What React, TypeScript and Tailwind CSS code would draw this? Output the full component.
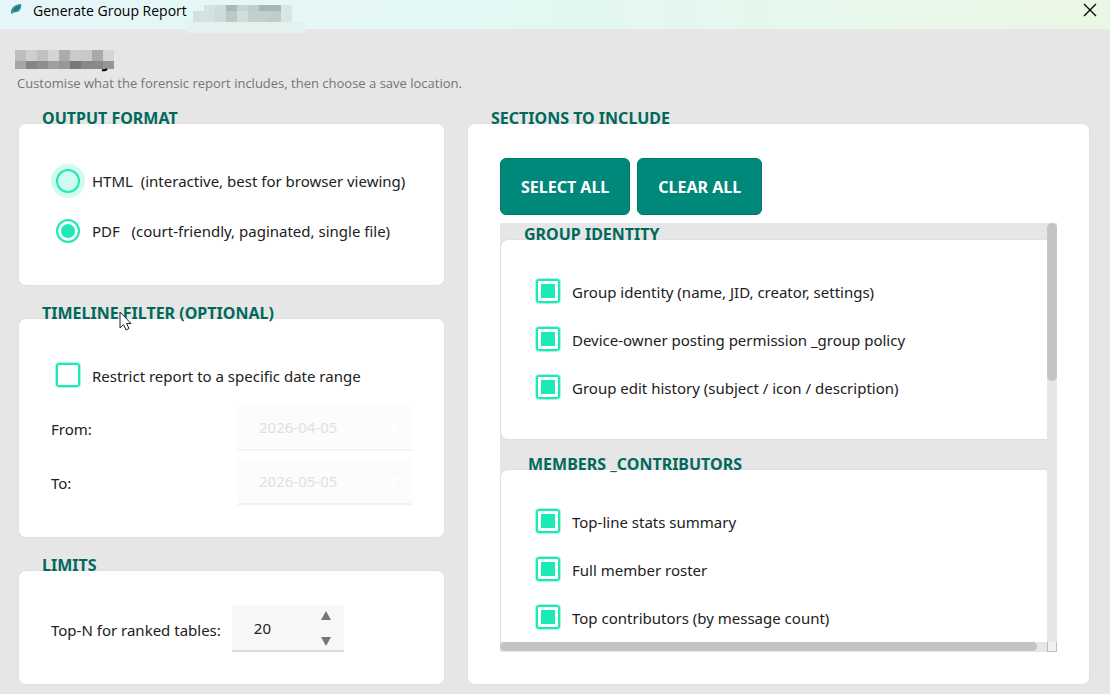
import React from "react";

const outputFormats = [
  { id: "html", name: "HTML", note: "(interactive, best for browser viewing)", hovered: true },
  { id: "pdf", name: "PDF", note: "(court-friendly, paginated, single file)", hovered: false },
];

const dateFields = [
  { id: "from", label: "From:", value: "2026-04-05" },
  { id: "to", label: "To:", value: "2026-05-05" },
];

const sections = [
  {
    title: "GROUP IDENTITY",
    titleClassName: "pl-6",
    items: [
      "Group identity (name, JID, creator, settings)",
      "Device-owner posting permission _group policy",
      "Group edit history (subject / icon / description)",
    ],
  },
  {
    title: "MEMBERS _CONTRIBUTORS",
    titleClassName: "pl-7",
    items: ["Top-line stats summary", "Full member roster", "Top contributors (by message count)"],
  },
];

const titleMosaic = [
  ["", "#d3e4e1", "#cddcd9", "#aab9b6", "#c6d5d2", "#bfcecb", "#a9b7b4", "#a9b7b4", "#d9e8e4"],
  ["#d1e2e0", "#d3e2e0", "#cddcd9", "#bbcac7", "#d0dfdc", "#c2d0cd", "#c2d0cd", "#bfcdca", "#d8e7e3"],
];

const headingMosaic = [
  ["#bfbebd", "#cfcfcf", "#c0c0bf", "#d3d4d6", "#adacab", "#cbcbcb", "#c8c9cc", "#aaa9a7", "#d4d5d7"],
  ["#a6a5a4", "#89837f", "#8d8e8d", "#9aa1a7", "#9b9692", "#74797d", "#888888", "#898986", "#949698"],
];

type PanelProps = {
  title: string;
  className?: string;
  titleClassName?: string;
  bodyClassName?: string;
  children: React.ReactNode;
};

const Panel: React.FC<PanelProps> = ({ title, className = "", titleClassName = "pl-6", bodyClassName = "", children }) => (
  <section className={`flex flex-col ${className}`}>
    <h2 className={`relative z-10 -mb-[5px] text-base leading-5 font-bold text-[#00695c] ${titleClassName}`}>{title}</h2>
    <div className={`rounded-lg border border-[#e0e0e0] bg-white ${bodyClassName}`}>{children}</div>
  </section>
);

const CheckItem: React.FC<{ label: string; checked?: boolean }> = ({ label, checked = false }) => (
  <label className="flex h-12 items-center gap-3">
    <input
      type="checkbox"
      defaultChecked={checked}
      className="size-6 shrink-0 appearance-none rounded-[3px] border-2 border-[#1de9b6] bg-white bg-clip-padding outline-1 outline-[#1de9b6]/40 checked:bg-[#1de9b6] checked:shadow-[inset_0_0_0_3px_white]"
    />
    <span className="pt-0.5">{label}</span>
  </label>
);

const App: React.FC = () => {
  return (
    <div className="flex min-h-screen flex-col bg-[#e6e6e6] font-['Noto_Sans',sans-serif] text-[15px] leading-5 text-[#212121]">
      {/* Title bar */}
      <header className="relative flex h-[29px] items-start bg-linear-to-r from-[#e6f6f9] via-[#e3f8f3] to-[#ebf7e4] pl-2 font-['Open_Sans',sans-serif] text-black">
        <svg width="16" height="16" viewBox="0 0 16 16" className="mt-0.5">
          <path d="M3 12C2.500 6 6 2.500 13 2C14 7 11 10.500 6 10.500L3 12Z" fill="#3d9097" />
          <path d="M5 9C6 6 9 4 12 3.500C12 7 9 9 5 9Z" fill="#1f7d86" />
        </svg>
        <h1 className="ml-[9px] text-[14px] leading-[22px]">Generate Group Report</h1>
        <svg width="118" height="33" viewBox="0 0 118 33" className="absolute top-0 left-[187px]">
          <rect x="0" y="22" width="118" height="11" fill="#e4f2ef" />
          {titleMosaic.map((row, y) =>
            row.map((fill, x) => fill && <rect key={`${x}-${y}`} x={6 + x * 11} y={y === 0 ? 5 : 11} width="11" height={y === 0 ? 6 : 11} fill={fill} />)
          )}
        </svg>
        <button type="button" aria-label="Close" className="ml-auto flex h-5 w-10 items-center justify-center">
          <svg width="14" height="14" viewBox="0 0 14 14" stroke="black" strokeWidth="1.3">
            <path d="M1 1L13 13M13 1L1 13" />
          </svg>
        </button>
      </header>

      <main className="flex grow flex-col pr-5 pb-[9px] pl-[18px]">
        <svg width="100" height="23" viewBox="0 0 100 23" className="mt-[21px] -ml-[3px]">
          {headingMosaic.map((row, y) =>
            row.map((fill, x) => <rect key={`${x}-${y}`} x={x * 11} y={y === 0 ? 0 : 11} width="11" height={y === 0 ? 11 : 8} fill={fill} />)
          )}
          <path d="M87 20Q90 21 92 19" stroke="black" strokeWidth="2" fill="none" />
        </svg>
        <p className="-ml-px font-['Open_Sans',sans-serif] text-[13px] leading-5 text-[#757575]">
          Customise what the forensic report includes, then choose a save location.
        </p>

        <div className="mt-[15px] grid grow grid-cols-[427fr_623fr] gap-[22px]">
          <div className="flex min-w-0 flex-col gap-[17px]">
            <Panel title="OUTPUT FORMAT" bodyClassName="px-8 pt-8 pb-[29px]">
              {outputFormats.map((format) => (
                <label key={format.id} className="flex h-[50px] items-center gap-[7px]">
                  <span className={`flex size-[34px] shrink-0 items-center justify-center rounded-full ${format.hovered ? "bg-[#d2fbf0]" : ""}`}>
                    <input
                      type="radio"
                      name="format"
                      defaultChecked={format.id === "pdf"}
                      className="size-6 appearance-none rounded-full border-2 border-[#1de9b6] bg-clip-padding checked:bg-[#1de9b6] checked:shadow-[inset_0_0_0_3px_white]"
                    />
                  </span>
                  <span className="whitespace-pre">{format.name}{format.id === "pdf" ? "   " : "  "}{format.note}</span>
                </label>
              ))}
            </Panel>

            <Panel title="TIMELINE FILTER (OPTIONAL)" className="relative" bodyClassName="px-8 pt-8 pb-8">
              <div className="pl-[5px]">
                <CheckItem label="Restrict report to a specific date range" />
              </div>
              <div className="mt-1.5 flex flex-col gap-2">
                {dateFields.map((field) => (
                  <div key={field.id} className="flex items-center justify-between">
                    <label htmlFor={field.id} className="pt-0.5">{field.label}</label>
                    <div className="relative w-[175px]">
                      <input
                        id={field.id}
                        type="text"
                        disabled
                        defaultValue={field.value}
                        className="block h-[46px] w-full rounded-t border-b-2 border-[#f2f2f2] bg-[#fcfcfc] px-[22px] text-[#e0e0e0]"
                      />
                      <svg width="10" height="9" viewBox="0 0 10 9" className="absolute top-[18px] right-[14px]">
                        <path d="M0 0H10L5 9Z" fill="white" />
                      </svg>
                    </div>
                  </div>
                ))}
              </div>
              {/* Mouse pointer */}
              <svg width="13" height="20" viewBox="0 0 13 20" className="absolute top-2 left-[101px] z-20">
                <path d="M1 1V17L4.500 13.500L7 19L10 17.500L7.500 12.500H12Z" fill="white" stroke="#222" />
              </svg>
            </Panel>

            <Panel title="LIMITS" bodyClassName="px-8 pt-[34px] pb-8">
              <div className="flex items-center gap-[11px]">
                <label htmlFor="top-n" className="pt-0.5">Top-N for ranked tables:</label>
                <div className="relative w-28">
                  <input
                    id="top-n"
                    type="text"
                    inputMode="numeric"
                    defaultValue="20"
                    className="block h-[47px] w-full rounded-t border-b-2 border-[#d9d9d9] bg-[#f7f7f7] px-[22px]"
                  />
                  <div className="absolute inset-y-0 right-3 flex flex-col justify-center gap-4 pt-px">
                    <button type="button" aria-label="Increase">
                      <svg width="12" height="10" viewBox="0 0 12 10"><path d="M6 0L11 9H1Z" fill="#757575" /></svg>
                    </button>
                    <button type="button" aria-label="Decrease">
                      <svg width="12" height="10" viewBox="0 0 12 10"><path d="M1 0H11L6 9Z" fill="#757575" /></svg>
                    </button>
                  </div>
                </div>
              </div>
            </Panel>
          </div>

          <Panel title="SECTIONS TO INCLUDE" className="min-w-0" bodyClassName="flex grow flex-col px-8 pt-[34px] pb-8">
            <div className="flex gap-[7px] text-base leading-5 font-bold text-white">
              <button type="button" className="h-[57px] rounded-md border border-[#00796b] bg-[#00897b] px-5">SELECT ALL</button>
              <button type="button" className="h-[57px] rounded-md border border-[#00796b] bg-[#00897b] px-5">CLEAR ALL</button>
            </div>

            {/* Scroll area */}
            <div className="mt-2 grid grow grid-cols-[1fr_10px] grid-rows-[1fr_10px] bg-[#e6e6e6]">
              <div className="flex h-[419px] flex-col gap-[14px] overflow-hidden pt-px">
                {sections.map((section) => (
                  <Panel
                    key={section.title}
                    title={section.title}
                    titleClassName={section.titleClassName}
                    className="shrink-0"
                    bodyClassName="h-[201px] rounded-r-none border-r-0 pt-[27px] pl-[35px]"
                  >
                    {section.items.map((item) => (
                      <CheckItem key={item} label={item} checked />
                    ))}
                  </Panel>
                ))}
              </div>
              <div>
                <div className="h-[158px] rounded-full bg-[#c4c4c4]" />
              </div>
              <div>
                <div className="mr-[10px] h-[9px] rounded-full bg-[#c4c4c4]" />
              </div>
              <div className="border border-t-0 border-[#bdbdbd] bg-[#eff0f6]" />
            </div>
          </Panel>
        </div>
      </main>
    </div>
  );
};

export default App;
